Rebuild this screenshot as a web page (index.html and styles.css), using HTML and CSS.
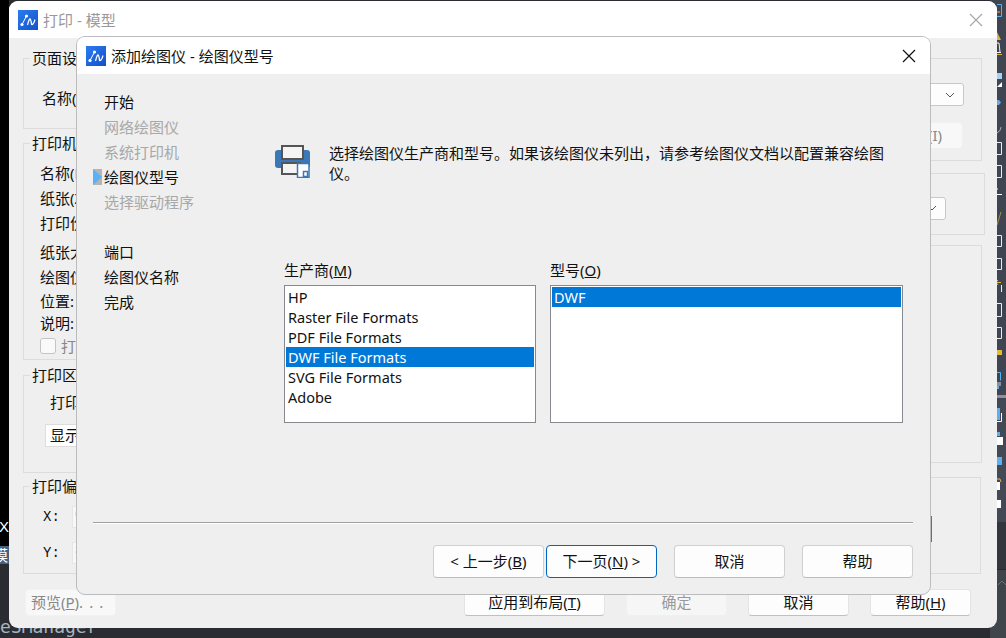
FILE: index.html
```html
<!DOCTYPE html>
<html lang="zh-CN">
<head>
  <meta charset="utf-8">
  <title>添加绘图仪 - 绘图仪型号</title>
  <link rel="stylesheet" href="styles.css">
</head>
<body>

<!-- desktop behind the windows -->
<div class="desk">
  <div class="desk-left">
    <div class="desk-x">X</div>
    <div class="desk-tab">模</div>
  </div>
  <div class="desk-name">eSManager</div>
  <svg class="tools" width="16" height="638" viewBox="-7 0 16 638">
    <rect x="-7" width="16" height="522" fill="#3f4652"/>
    <rect x="-7" y="400" width="16" height="122" fill="#444a55"/>
    <rect x="-7" y="522" width="16" height="47" fill="#33363d"/>
    <rect x="-7" y="569" width="16" height="1" fill="#272930"/>
    <rect x="-7" y="570" width="16" height="68" fill="#40444b"/>
    <path d="M0 4.5h4.5v12H0" fill="none" stroke="#5ab0f0"/>
    <path d="M0 12h3" stroke="#e8b040"/>
    <path d="M0 32l4 8H0z" fill="#e8b040"/>
    <path d="M0 52.5h4M0 43h2l1 9" fill="none" stroke="#eee"/>
    <path d="M0 54.5h5" stroke="#e8b040"/>
    <rect y="73" width="5" height="6" fill="#a8d0f5"/>
    <path d="M0 87l5-5v5z" fill="#fff"/>
    <path d="M0 100h2l2 2.5-2 2.5H0z" fill="#6ea8e0"/>
    <path d="M0 133q4-2 4-6" fill="none" stroke="#aab"/>
    <path d="M0 142.5h4.5v12H0" fill="none" stroke="#eee"/>
    <path d="M0 165.5h4.5v12H0" fill="none" stroke="#eee"/>
    <path d="M0 194.5h5M0 190v-2" stroke="#fff"/>
    <path d="M0 225l4-13" stroke="#b09040"/>
    <path d="M0 235.5h4.5v11H0" fill="none" stroke="#eee"/>
    <path d="M0 258.5h4.5v11H0" fill="none" stroke="#eee"/>
    <path d="M0 282.5h4M1 280l-2 2.500 2 2.500" fill="none" stroke="#e8b040"/>
    <path d="M4.500 285v7" stroke="#eee"/>
    <path d="M0 303.500h4.500v13H0" fill="none" stroke="#eee"/>
    <path d="M0 327.500h4.500v11H0" fill="none" stroke="#eee"/>
    <rect y="350" width="5" height="5" fill="#e8b830"/>
    <path d="M0 372.500h3.500v8" fill="none" stroke="#5ab0f0"/>
    <rect y="382" width="4" height="4" fill="#8a8f98"/>
    <rect y="386" width="2" height="3" fill="#5ab0f0"/>
    <rect y="395" width="9" height="3" fill="#8a93a0"/>
    <rect y="408" width="3" height="12" fill="#5ab0f0"/>
    <path d="M4.500 413v8.500H0" fill="none" stroke="#fff"/>
    <rect y="432" width="3" height="4" fill="#5ab0f0"/>
    <rect y="437" width="6" height="8" fill="#fff"/>
    <rect y="457" width="5" height="8" fill="#5ab0f0"/>
    <path d="M0 479h3l1 3" fill="none" stroke="#e8b040"/>
    <rect y="482" width="3" height="8" fill="#fff"/>
    <rect y="500" width="4" height="8" fill="#fff"/>
    <path d="M1 585l4-4 4 4" fill="none" stroke="#6c7078"/>
  </svg>
</div>

<!-- print window, mostly covered by the dialog -->
<div class="win print-win">
  <div class="titlebar print-title">
    <svg class="logo" viewBox="0 0 20 20"><use href="#app-logo"/></svg>
    <span class="print-caption">打印 - 模型</span>
    <svg class="close close-grey" viewBox="0 0 14 14"><path d="M1 1l12 12M13 1L1 13"/></svg>
  </div>
  <div class="print-body">
    <div class="print-cols">
      <div class="col col-left">
        <fieldset class="group g-page">
          <legend>页面设置</legend>
          <div class="row r-name">名称(A)</div>
        </fieldset>
        <fieldset class="group g-printer">
          <legend>打印机/绘图仪</legend>
          <div class="row r-first">名称(M)</div>
          <div class="row">纸张(Z)</div>
          <div class="row">打印份数</div>
          <div class="row r-size">纸张大小</div>
          <div class="row">绘图仪:</div>
          <div class="row r-tight">位置:</div>
          <div class="row r-tight">说明:</div>
          <div class="row r-check"><span class="check"></span><span class="muted">打印到文件</span></div>
        </fieldset>
        <fieldset class="group g-area">
          <legend>打印区域</legend>
          <div class="row r-area">打印范围(W)</div>
          <div class="combo-left">显示</div>
        </fieldset>
        <fieldset class="group g-offset">
          <legend>打印偏移</legend>
          <div class="offset"><span>X:</span><span class="offset-box">0</span></div>
          <div class="offset"><span>Y:</span><span class="offset-box">8</span></div>
        </fieldset>
      </div>
      <div class="col col-right">
        <div class="rgroup rg-page">
          <div class="combo combo-page"><svg class="chev" viewBox="0 0 10 6"><path d="M1 1l4 4 4-4"/></svg></div>
          <div class="btn-add"><span>特性(I)</span></div>
        </div>
        <div class="rgroup rg-paper">
          <div class="combo combo-paper"><svg class="chev" viewBox="0 0 10 6"><path d="M1 1l4 4 4-4"/></svg></div>
        </div>
        <div class="rgroup rg-scale"></div>
        <div class="rgroup rg-shade"><div class="focus-box"></div></div>
      </div>
    </div>
    <div class="print-actions">
      <div class="pbtn pbtn-preview">预览(<u>P</u>)<span class="dots">...</span></div>
      <div class="pbtn-right">
        <div class="pbtn pbtn-apply">应用到布局(<u>T</u>)</div>
        <div class="pbtn pbtn-off">确定</div>
        <div class="pbtn">取消</div>
        <div class="pbtn">帮助(<u>H</u>)</div>
      </div>
    </div>
  </div>
</div>

<!-- add plotter dialog -->
<div class="win dialog">
  <div class="titlebar dlg-title">
    <svg class="logo logo-dlg" viewBox="0 0 20 20"><use href="#app-logo"/></svg>
    <span class="dlg-caption">添加绘图仪 - 绘图仪型号</span>
    <svg class="close" viewBox="0 0 14 14"><path d="M1 1l12 12M13 1L1 13"/></svg>
  </div>
  <div class="dlg-body">
    <div class="dlg-main">
      <ul class="steps">
        <li>开始</li>
        <li class="off">网络绘图仪</li>
        <li class="off">系统打印机</li>
        <li class="cur">绘图仪型号</li>
        <li class="off">选择驱动程序</li>
        <li class="gap">端口</li>
        <li>绘图仪名称</li>
        <li>完成</li>
      </ul>
      <div class="pane">
        <div class="intro">
          <svg class="printer" width="35" height="33" viewBox="0 0 35 33">
            <path d="M3 5h29a3 3 0 0 1 3 3v12a3 3 0 0 1-3 3H3a3 3 0 0 1-3-3V8a3 3 0 0 1 3-3z" fill="#3a78b8"/>
            <rect x="7" y="1" width="21" height="13" fill="#f4f4f4" stroke="#555" stroke-width="2"/>
            <rect x="7" y="18" width="18" height="11" fill="#f4f4f4" stroke="#555" stroke-width="2"/>
            <rect x="22.500" y="18.500" width="11.500" height="14" fill="#fff" stroke="#3a78b8" stroke-width="1.500"/>
            <rect x="28.500" y="26.500" width="4" height="5" fill="#fff" stroke="#3a78b8" stroke-width="1.500"/>
          </svg>
          <p>选择绘图仪生产商和型号。如果该绘图仪未列出，请参考绘图仪文档以配置兼容绘图仪。</p>
        </div>
        <div class="lists">
          <div class="list-col list-maker">
            <label>生产商(<u>M</u>)</label>
            <ul class="listbox">
              <li>HP</li>
              <li>Raster File Formats</li>
              <li>PDF File Formats</li>
              <li class="sel">DWF File Formats</li>
              <li>SVG File Formats</li>
              <li>Adobe</li>
            </ul>
          </div>
          <div class="list-col list-model">
            <label>型号(<u>O</u>)</label>
            <ul class="listbox">
              <li class="sel">DWF</li>
            </ul>
          </div>
        </div>
      </div>
    </div>
    <div class="rule"></div>
    <div class="dlg-actions">
      <div class="btn">&lt; 上一步(<u>B</u>)</div>
      <div class="btn btn-next">下一页(<u>N</u>) &gt;</div>
      <div class="btn btn-cancel">取消</div>
      <div class="btn btn-help">帮助</div>
    </div>
  </div>
</div>

<svg width="0" height="0" class="defs">
  <defs>
    <linearGradient id="logo-fill" x1="0" y1="0" x2="1" y2="1">
      <stop offset="0" stop-color="#2b7cf0"/>
      <stop offset="1" stop-color="#1450c8"/>
    </linearGradient>
    <symbol id="app-logo" viewBox="0 0 20 20">
      <rect width="20" height="20" fill="url(#logo-fill)"/>
      <path d="M4 14.500L8.500 6" fill="none" stroke="#fff" stroke-width="1"/>
      <path d="M9.500 15q2-8 3-5.500t1 5q2 .5 3.500-5" fill="none" stroke="#fff" stroke-width="1.200"/>
      <circle cx="8.500" cy="6" r="1.600" fill="#fff"/>
      <circle cx="4" cy="14.500" r="1.600" fill="#fff"/>
    </symbol>
  </defs>
</svg>

</body>
</html>
```

FILE: styles.css
```css
html, body{
  margin: 0;
  height: 100%;
}

body{
  position: relative;
  width: 1006px;
  height: 638px;
  overflow: hidden;
  background-color: #2a2c32;
  font-family: "Noto Sans", "Noto Sans CJK SC", sans-serif;
  font-size: 15px;
  color: #111;
}

ul{
  list-style: none;
  margin: 0;
  padding: 0;
}

.defs{
  position: absolute;
}

/* desktop ============================== */

.desk-left{
  position: absolute;
  left: 0;
  top: 0;
  width: 9px;
  height: 564px;
  background-color: #000;
  overflow: hidden;
}

.desk-x{
  position: absolute;
  left: -1px;
  top: 519px;
  color: #fff;
  font-family: "Liberation Sans", sans-serif;
  font-size: 15px;
  line-height: 16px;
}

.desk-tab{
  position: absolute;
  left: -7px;
  top: 546px;
  width: 16px;
  height: 18px;
  background-color: #46607f;
  color: #fff;
  font-size: 15px;
  line-height: 18px;
}

.desk-name{
  position: absolute;
  left: 0;
  top: 616px;
  color: #a8b4c0;
  font-family: "DejaVu Sans Mono", monospace;
  font-size: 18px;
  line-height: 22px;
}

.tools{
  position: absolute;
  left: 990px;
  top: 0;
}

/* windows ============================== */

.win{
  position: absolute;
  display: flex;
  flex-direction: column;
  background-color: #efefef;
}

.titlebar{
  display: flex;
  align-items: center;
  background-color: #fff;
  flex-shrink: 0;
}

.logo{
  width: 20px;
  height: 20px;
  flex-shrink: 0;
}

.close{
  width: 14px;
  height: 14px;
  margin-left: auto;
  fill: none;
  stroke: #111;
  stroke-width: 1.2;
}

.close-grey{
  stroke: #a8a8a8;
}

/* print window ============================== */

.print-win{
  left: 9px;
  top: 1px;
  width: 988px;
  height: 627px;
  border-radius: 9px;
  overflow: hidden;
}

.print-title{
  height: 37px;
  padding: 0 14px 0 9px;
}

.print-caption{
  margin-left: 5px;
  color: #999;
}

.print-body{
  flex: 1;
  display: flex;
  flex-direction: column;
  padding: 20px 12px 14px 14px;
  box-sizing: border-box;
}

.print-cols{
  display: flex;
  justify-content: space-between;
  height: 516px;
}

.col-left{
  width: 470px;
  display: flex;
  flex-direction: column;
}

.group{
  position: relative;
  margin: 0;
  padding: 0;
  border: 1px solid #dcdcdc;
  min-width: 0;
  box-sizing: border-box;
}

.group legend{
  margin-left: 6px;
  padding: 0 2px;
  line-height: 20px;
  color: #111;
}

.g-page{
  height: 81px;
  margin-top: -10px;
}

.g-printer{
  height: 227px;
  margin-top: 4px;
}

.g-area{
  height: 108px;
  margin-top: 5px;
}

.g-offset{
  height: 98px;
  margin-top: 3px;
}

.row{
  margin-left: 16px;
  line-height: 25px;
  white-space: nowrap;
}

.r-name{
  margin-top: 18px;
  margin-left: 18px;
}

.r-first{
  margin-top: 8px;
}

.r-size{
  margin-top: 4px;
}

.r-tight{
  line-height: 22px;
}

.r-check{
  display: flex;
  align-items: center;
  gap: 5px;
  line-height: 22px;
  margin-top: 1px;
}

.r-area{
  margin: 5px 0 0 26px;
}

.muted{
  color: #888;
}

.check{
  width: 14px;
  height: 14px;
  background-color: #fafafa;
  border: 1px solid #c4c4c4;
  border-radius: 3px;
}

.combo-left{
  width: 300px;
  height: 23px;
  margin: 9px 0 0 21px;
  box-sizing: border-box;
  padding-left: 4px;
  background-color: #fff;
  border: 1px solid #ddd;
  line-height: 21px;
}

.offset{
  display: flex;
  align-items: center;
  height: 36px;
  margin-left: 19px;
  font-family: "Liberation Mono", monospace;
  font-size: 14px;
}

.offset:first-of-type{
  margin-top: 3px;
}

.offset span:first-child{
  width: 29px;
}

.offset-box{
  width: 300px;
  height: 20px;
  padding-left: 2px;
  background-color: #f8f8f8;
  border: 1px solid #e6e6e6;
  color: #777;
}

.col-right{
  width: 486px;
  display: flex;
  flex-direction: column;
  margin-top: -1px;
}

.rgroup{
  position: relative;
  box-sizing: border-box;
  border: 1px solid #dcdcdc;
}

.rg-page{
  height: 103px;
  width: 483px;
  margin-top: 1px;
  display: flex;
  flex-direction: column;
  align-items: flex-end;
  padding: 24px 17px 0 0;
}

.rg-paper{
  height: 63px;
  width: 486px;
  margin-top: 12px;
  display: flex;
  justify-content: flex-end;
  padding: 23px 38px 0 0;
}

.rg-scale{
  height: 219px;
  width: 483px;
  margin-top: 10px;
}

.rg-shade{
  height: 97px;
  width: 482px;
  margin-top: 14px;
  display: flex;
  justify-content: flex-end;
  padding: 38px 48px 0 0;
}

.combo{
  display: flex;
  align-items: center;
  justify-content: flex-end;
  width: 300px;
  height: 23px;
  padding-right: 8px;
  box-sizing: border-box;
  background-color: #fdfdfd;
  border: 1px solid #c8c8c8;
  border-radius: 3px;
}

.chev{
  width: 10px;
  height: 6px;
  fill: none;
  stroke: #555;
  stroke-width: 1;
}

.btn-add{
  width: 200px;
  height: 27px;
  margin-top: 16px;
  margin-right: 1px;
  text-align: right;
  padding-right: 20px;
  box-sizing: border-box;
  background-color: #f8f8f8;
  border: 1px solid #f0f0f0;
  border-radius: 4px;
  line-height: 25px;
  color: #888;
}

.focus-box{
  width: 120px;
  height: 26px;
  box-sizing: border-box;
  border: 1px solid #4a78a8;
}

.print-actions{
  display: flex;
  justify-content: space-between;
  margin-top: 15px;
}

.pbtn-right{
  display: flex;
  gap: 21px;
  margin-right: 14px;
}

.pbtn{
  width: 101px;
  height: 27px;
  box-sizing: border-box;
  text-align: center;
  line-height: 25px;
  background-color: #fdfdfd;
  border: 1px solid #e4e4e4;
  border-bottom-color: #c0c0c0;
  border-radius: 4px;
}

.pbtn-preview{
  width: 91px;
  margin-left: 2px;
  background-color: #f8f8f8;
  border-color: #f2f2f2;
  color: #888;
  text-align: left;
  padding-left: 5px;
}

.dots{
  letter-spacing: 6px;
}

.pbtn-apply{
  width: 141px;
}

.pbtn-off{
  background-color: #f6f6f6;
  border-color: #f0f0f0;
  color: #999;
}

/* dialog ============================== */

.dialog{
  left: 76px;
  top: 36px;
  width: 855px;
  height: 559px;
  box-sizing: border-box;
  border: 1px solid #bcbcbc;
  border-radius: 9px;
  overflow: hidden;
}

.dlg-title{
  height: 37px;
  padding: 0 14px 0 9px;
}

.dlg-caption{
  margin-left: 5px;
  color: #111;
}

.dlg-body{
  flex: 1;
  display: flex;
  flex-direction: column;
  padding: 0 17px 16px 16px;
  min-height: 0;
}

.dlg-main{
  flex: 1;
  display: flex;
  min-height: 0;
}

.steps{
  width: 171px;
  flex-shrink: 0;
  padding: 16px 0 0 11px;
  line-height: 25px;
}

.steps .off{
  color: #a8a8a8;
}

.steps .gap{
  margin-top: 25px;
}

.steps .cur{
  position: relative;
}

.steps .cur::before{
  content: "";
  position: absolute;
  left: -11px;
  top: 4px;
  width: 0;
  height: 0;
  border-left: 9px solid #5cb0f5;
  border-top: 8px solid #b4b4b4;
  border-bottom: 8px solid #b4b4b4;
}

.pane{
  flex: 1;
  display: flex;
  flex-direction: column;
}

.intro{
  display: flex;
  align-items: flex-start;
  height: 186px;
  padding-top: 69px;
  box-sizing: border-box;
}

.printer{
  flex-shrink: 0;
  margin: 2px 19px 0 0;
}

.intro p{
  width: 562px;
  margin: 0;
  line-height: 20px;
}

.lists{
  display: flex;
  gap: 14px;
  margin-left: 9px;
  height: 164px;
}

.list-col{
  display: flex;
  flex-direction: column;
}

.list-col label{
  line-height: 20px;
  margin-bottom: 5px;
}

.list-maker{
  width: 252px;
}

.list-model{
  width: 353px;
}

.listbox{
  height: 138px;
  box-sizing: border-box;
  padding: 1px;
  background-color: #fff;
  border: 1px solid #868a8e;
  font-size: 14.5px;
  line-height: 20px;
}

.listbox li{
  padding-left: 2px;
  height: 20px;
}

.listbox .sel{
  background-color: #0078d7;
  color: #fff;
}

.rule{
  height: 1px;
  background-color: #a0a0a0;
  border-bottom: 1px solid #fff;
  margin-bottom: 21px;
}

.dlg-actions{
  display: flex;
  justify-content: flex-end;
}

.btn{
  width: 111px;
  height: 33px;
  box-sizing: border-box;
  text-align: center;
  line-height: 31px;
  background-color: #fdfdfd;
  border: 1px solid #d0d0d0;
  border-bottom-color: #bdbdbd;
  border-radius: 4px;
}

.btn-next{
  margin-left: 2px;
  border-color: #0067c0;
}

.btn-cancel,
.btn-help{
  margin-left: 17px;
}
```
